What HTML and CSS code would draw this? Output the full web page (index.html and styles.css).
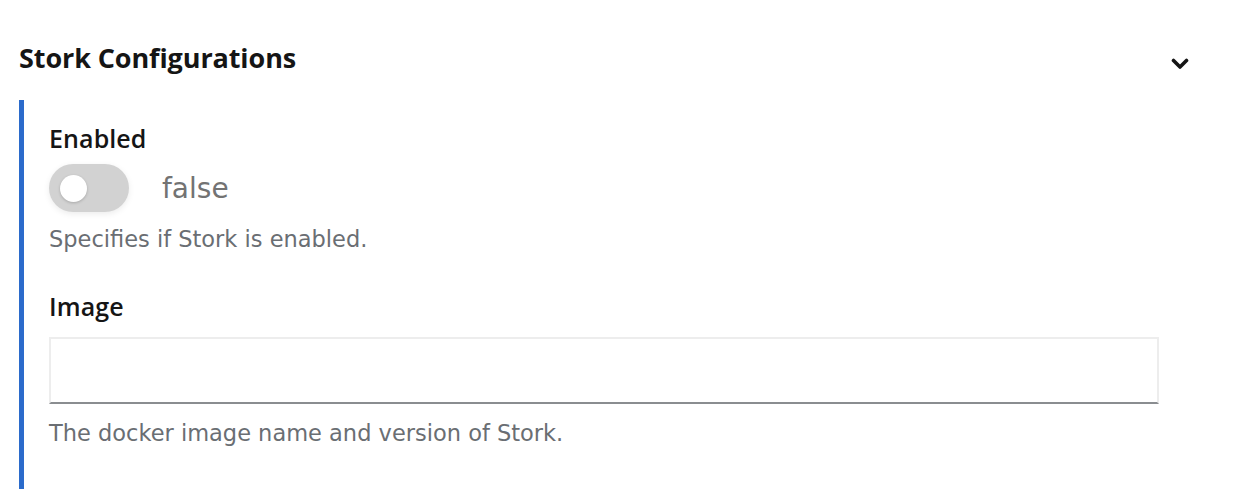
FILE: index.html
```html
<!DOCTYPE html>
<html>
<head>
<meta charset="utf-8">
<link rel="stylesheet" href="styles.css">
</head>
<body>
<section class="group">
  <header class="group-head">
    <h2 class="group-title">Stork Configurations</h2>
    <svg class="chevron" width="18" height="12" viewBox="0 0 18 12"><path d="M2.5 2.5 L9 9 L15.5 2.5" fill="none" stroke="#151515" stroke-width="3.6" stroke-linecap="round" stroke-linejoin="round"/></svg>
  </header>
  <div class="group-body">
    <div class="field">
      <div class="label">Enabled</div>
      <div class="switch-row">
        <span class="switch"><span class="knob"></span></span>
        <span class="switch-text">false</span>
      </div>
      <div class="helper">Specifies if Stork is enabled.</div>
    </div>
    <div class="field field-image">
      <div class="label">Image</div>
      <input class="input" type="text">
      <div class="helper helper-last">The docker image name and version of Stork.</div>
    </div>
  </div>
</section>
</body>
</html>
```
FILE: styles.css
```css
* { box-sizing: border-box; }
html, body { margin: 0; padding: 0; background: #fff; }
body { font-family: "Open Sans", "Liberation Sans", sans-serif; color: #151515; }
.group { padding: 0 0 0 19px; width: 1242px; }
.group-head {
  display: flex; align-items: center; justify-content: space-between;
  height: 100px; padding-right: 53px;
}
.group-title { margin: 0; padding-top: 15px; font-size: 27px; font-weight: 700; letter-spacing: -0.1px; }
.chevron { margin-top: 28px; }
.group-body { border-left: 5px solid #2b6bcb; padding: 23px 0 42px 25px; width: 1140px; }
.field { margin-bottom: 37px; }
.field-image { margin-bottom: 0; }
.label { font-size: 25px; font-weight: 600; line-height: 30px; height: 30px; letter-spacing: 0.1px; }
.switch-row { display: flex; align-items: center; margin-top: 11px; height: 48px; }
.switch { position: relative; width: 80px; height: 48px; border-radius: 24px; background: #d2d2d2; display: inline-block; box-shadow: 0 2px 6px rgba(0,0,0,0.08); }
.knob { position: absolute; left: 11px; top: 11px; width: 27px; height: 27px; border-radius: 50%; background: #fff; box-shadow: 0 1px 3px rgba(0,0,0,0.2); }
.switch-text { margin-left: 33px; font-family: "DejaVu Sans", sans-serif; font-size: 28px; color: #737373; }
.helper { font-family: "DejaVu Sans", sans-serif; font-size: 22.5px; color: #6a6e73; line-height: 30px; margin-top: 12px; }
.input { display: block; margin-top: 16px; width: 1110px; height: 67px; border: 2px solid #ededed; border-bottom-color: #8a8d90; background: #fff; outline: none; }
.helper-last { margin-top: 14px; }
```
